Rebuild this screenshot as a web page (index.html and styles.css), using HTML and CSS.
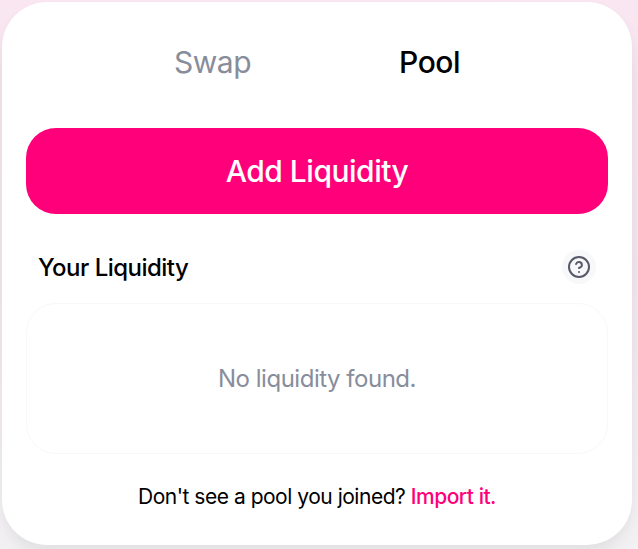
FILE: index.html
```html
<!DOCTYPE html>
<html lang="en">
<head>
<meta charset="utf-8">
<title>Pool</title>
<link rel="stylesheet" href="styles.css">
</head>
<body>
<main class="card">
  <nav class="tabs">
    <a class="tab">Swap</a>
    <a class="tab active">Pool</a>
  </nav>
  <button class="add">Add Liquidity</button>
  <div class="heading">
    <h2 class="title">Your Liquidity</h2>
    <span class="help">
      <svg width="24" height="24" viewBox="0 0 24 24" fill="none" stroke="currentColor" stroke-width="2" stroke-linecap="round" stroke-linejoin="round"><circle cx="12" cy="12" r="10"/><path d="M9.09 9a3 3 0 0 1 5.83 1c0 2-3 3-3 3"/><path d="M12 17h.01"/></svg>
    </span>
  </div>
  <section class="empty">No liquidity found.</section>
  <p class="import">Don't see a pool you joined? <a class="link">Import it.</a></p>
</main>
</body>
</html>
```
FILE: styles.css
```css
* { box-sizing: border-box; }
body {
  margin: 0;
  height: 549px;
  overflow: hidden;
  padding: 2px 6px 4px 2px;
  font-family: Inter, sans-serif;
  letter-spacing: -0.48px;
  background: linear-gradient(#f9e6f0, #f4e8f0 50%, #f5f4f6);
}
.card {
  height: 543px;
  padding: 22px 24px 24px;
  border-radius: 45px;
  background: #fff;
  box-shadow: 0 0 1.5px rgba(0,0,0,.01), 0 6px 12px rgba(0,0,0,.04), 0 24px 36px rgba(0,0,0,.04), 0 36px 48px rgba(0,0,0,.01);
}
.tabs {
  display: flex;
  justify-content: space-evenly;
  height: 75px;
  margin-bottom: 29px;
  align-items: center;
  font-size: 30px;
}
.tab { color: #888d9b; }
.active { color: #000; font-weight: 500; }
.add {
  display: block;
  width: 100%;
  height: 86px;
  border: 0;
  border-radius: 30px;
  background: #ff007a;
  color: #fff;
  font: 500 30px Inter, sans-serif;
  letter-spacing: -0.48px;
}
.heading {
  display: flex;
  align-items: center;
  justify-content: space-between;
  height: 36px;
  margin: 35px 12px 18px;
}
.title { margin: 0; font-size: 24px; font-weight: 500; letter-spacing: -0.52px; }
.help {
  display: flex;
  align-items: center;
  justify-content: center;
  width: 34px;
  height: 34px;
  border-radius: 50%;
  background: #f7f8fa;
  color: #565a69;
}
.empty {
  display: flex;
  align-items: center;
  justify-content: center;
  height: 151px;
  border: 1px solid #f7f8fa;
  border-radius: 30px;
  color: #888d9b;
  font-size: 24px;
}
.import { margin: 30px 0 0; text-align: center; font-size: 21px; line-height: 25px; }
.link { color: #ff007a; font-weight: 500; }
```
